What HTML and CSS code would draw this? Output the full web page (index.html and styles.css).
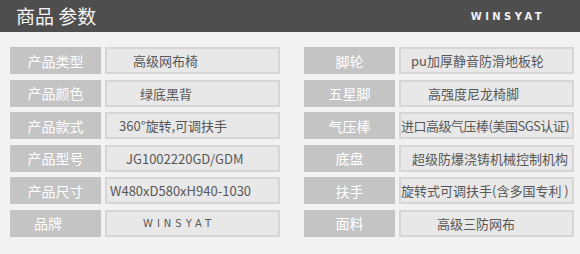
FILE: index.html
```html
<!DOCTYPE html>
<html lang="zh-CN">
<head>
<meta charset="utf-8">
<title>商品参数</title>
<link rel="stylesheet" href="styles.css">
</head>
<body>
<div class="page">
  <header class="head">
    <h1 class="title">商品 参数</h1>
    <span class="brand">WINSYAT</span>
  </header>
  <main class="params">
    <div class="col">
      <div class="row"><div class="label">产品类型</div><div class="value ind-28">高级网布椅</div></div>
      <div class="row"><div class="label">产品颜色</div><div class="value ind-35">绿底黑背</div></div>
      <div class="row"><div class="label">产品款式</div><div class="value ind-14">360°旋转,可调扶手</div></div>
      <div class="row"><div class="label">产品型号</div><div class="value ind-21">JG1002220GD/GDM</div></div>
      <div class="row"><div class="label">产品尺寸</div><div class="value ind-5">W480xD580xH940-1030</div></div>
      <div class="row"><div class="label lab-left">品牌</div><div class="value ind-38 logo">WINSYAT</div></div>
    </div>
    <div class="col">
      <div class="row"><div class="label">脚轮</div><div class="value ind-12">pu加厚静音防滑地板轮</div></div>
      <div class="row"><div class="label">五星脚</div><div class="value ind-29">高强度尼龙椅脚</div></div>
      <div class="row"><div class="label">气压棒</div><div class="value ind-1 tight">进口高级气压棒(美国SGS认证)</div></div>
      <div class="row"><div class="label">底盘</div><div class="value ind-13">超级防爆浇铸机械控制机构</div></div>
      <div class="row"><div class="label">扶手</div><div class="value ind-1">旋转式可调扶手(含多国专利 )</div></div>
      <div class="row"><div class="label">面料</div><div class="value ind-38">高级三防网布</div></div>
    </div>
  </main>
</div>
</body>
</html>
```

FILE: styles.css
```css
html, body {
  margin: 0;
  padding: 0;
}
body {
  background: #f2f2f2;
  font-family: "Noto Sans CJK SC", "Noto Sans", "Liberation Sans", sans-serif;
  width: 580px;
  height: 254px;
  overflow: hidden;
}
.page {
  width: 580px;
}
.head {
  height: 32px;
  background: #4e4e4e;
  display: flex;
  align-items: center;
  justify-content: space-between;
  padding: 0 38px 0 16px;
}
.title {
  margin: 0;
  font-size: 19px;
  font-weight: normal;
  color: #f4f4f4;
  line-height: 32px;
}
.brand {
  font-family: "DejaVu Sans", "Liberation Sans", sans-serif;
  font-weight: bold;
  font-size: 10px;
  letter-spacing: 3.4px;
  color: #f0f0f0;
  margin-right: -3px;
}
.params {
  display: flex;
  gap: 24px;
  padding: 15px 0 0 10px;
}
.col {
  width: 270px;
  display: flex;
  flex-direction: column;
  gap: 5.6px;
}
.row {
  display: flex;
  gap: 4px;
  height: 27px;
}
.label {
  width: 91px;
  flex: none;
  background: #c4c4c4;
  color: #fff;
  font-size: 14px;
  display: flex;
  align-items: center;
  justify-content: center;
}
.lab-left {
  justify-content: flex-start;
  padding-left: 24px;
  box-sizing: border-box;
}
.value {
  flex: 1;
  box-sizing: border-box;
  background: #e8e8e8;
  border: 2px solid #d6d6d6;
  color: #585858;
  font-size: 13px;
  display: flex;
  align-items: center;
  white-space: nowrap;
  overflow: hidden;
}
.tight {
  letter-spacing: -0.5px;
}
.logo {
  font-family: "DejaVu Sans", "Liberation Sans", sans-serif;
  font-size: 10px;
  letter-spacing: 4px;
  color: #5a5a5a;
}
.ind-1 { padding-left: 0; }
.ind-5 { padding-left: 3px; }
.ind-12 { padding-left: 10px; }
.ind-13 { padding-left: 11px; }
.ind-14 { padding-left: 12px; }
.ind-21 { padding-left: 19px; }
.ind-28 { padding-left: 26px; }
.ind-29 { padding-left: 27px; }
.ind-35 { padding-left: 33px; }
.ind-38 { padding-left: 36px; }
```
